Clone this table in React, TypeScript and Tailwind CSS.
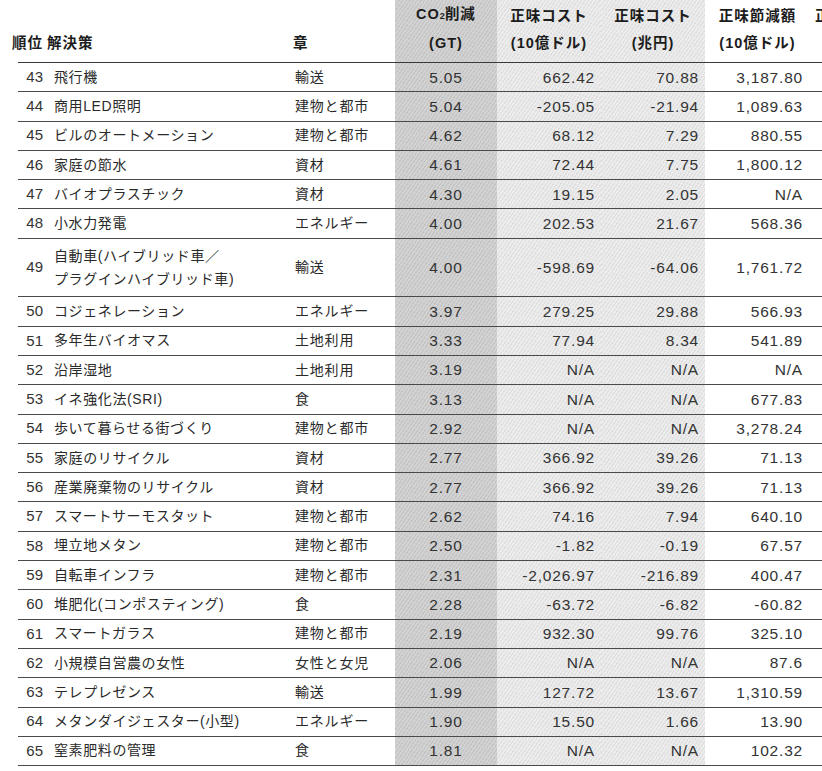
type Row = {
  rank: number
  name: string[]
  chapter: string
  co2: string
  costUsd: string
  costYen: string
  savings: string
}

const rows: Row[] = [
  { rank: 43, name: ['飛行機'], chapter: '輸送', co2: '5.05', costUsd: '662.42', costYen: '70.88', savings: '3,187.80' },
  { rank: 44, name: ['商用LED照明'], chapter: '建物と都市', co2: '5.04', costUsd: '-205.05', costYen: '-21.94', savings: '1,089.63' },
  { rank: 45, name: ['ビルのオートメーション'], chapter: '建物と都市', co2: '4.62', costUsd: '68.12', costYen: '7.29', savings: '880.55' },
  { rank: 46, name: ['家庭の節水'], chapter: '資材', co2: '4.61', costUsd: '72.44', costYen: '7.75', savings: '1,800.12' },
  { rank: 47, name: ['バイオプラスチック'], chapter: '資材', co2: '4.30', costUsd: '19.15', costYen: '2.05', savings: 'N/A' },
  { rank: 48, name: ['小水力発電'], chapter: 'エネルギー', co2: '4.00', costUsd: '202.53', costYen: '21.67', savings: '568.36' },
  { rank: 49, name: ['自動車(ハイブリッド車／', 'プラグインハイブリッド車)'], chapter: '輸送', co2: '4.00', costUsd: '-598.69', costYen: '-64.06', savings: '1,761.72' },
  { rank: 50, name: ['コジェネレーション'], chapter: 'エネルギー', co2: '3.97', costUsd: '279.25', costYen: '29.88', savings: '566.93' },
  { rank: 51, name: ['多年生バイオマス'], chapter: '土地利用', co2: '3.33', costUsd: '77.94', costYen: '8.34', savings: '541.89' },
  { rank: 52, name: ['沿岸湿地'], chapter: '土地利用', co2: '3.19', costUsd: 'N/A', costYen: 'N/A', savings: 'N/A' },
  { rank: 53, name: ['イネ強化法(SRI)'], chapter: '食', co2: '3.13', costUsd: 'N/A', costYen: 'N/A', savings: '677.83' },
  { rank: 54, name: ['歩いて暮らせる街づくり'], chapter: '建物と都市', co2: '2.92', costUsd: 'N/A', costYen: 'N/A', savings: '3,278.24' },
  { rank: 55, name: ['家庭のリサイクル'], chapter: '資材', co2: '2.77', costUsd: '366.92', costYen: '39.26', savings: '71.13' },
  { rank: 56, name: ['産業廃棄物のリサイクル'], chapter: '資材', co2: '2.77', costUsd: '366.92', costYen: '39.26', savings: '71.13' },
  { rank: 57, name: ['スマートサーモスタット'], chapter: '建物と都市', co2: '2.62', costUsd: '74.16', costYen: '7.94', savings: '640.10' },
  { rank: 58, name: ['埋立地メタン'], chapter: '建物と都市', co2: '2.50', costUsd: '-1.82', costYen: '-0.19', savings: '67.57' },
  { rank: 59, name: ['自転車インフラ'], chapter: '建物と都市', co2: '2.31', costUsd: '-2,026.97', costYen: '-216.89', savings: '400.47' },
  { rank: 60, name: ['堆肥化(コンポスティング)'], chapter: '食', co2: '2.28', costUsd: '-63.72', costYen: '-6.82', savings: '-60.82' },
  { rank: 61, name: ['スマートガラス'], chapter: '建物と都市', co2: '2.19', costUsd: '932.30', costYen: '99.76', savings: '325.10' },
  { rank: 62, name: ['小規模自営農の女性'], chapter: '女性と女児', co2: '2.06', costUsd: 'N/A', costYen: 'N/A', savings: '87.6' },
  { rank: 63, name: ['テレプレゼンス'], chapter: '輸送', co2: '1.99', costUsd: '127.72', costYen: '13.67', savings: '1,310.59' },
  { rank: 64, name: ['メタンダイジェスター(小型)'], chapter: 'エネルギー', co2: '1.90', costUsd: '15.50', costYen: '1.66', savings: '13.90' },
  { rank: 65, name: ['窒素肥料の管理'], chapter: '食', co2: '1.81', costUsd: 'N/A', costYen: 'N/A', savings: '102.32' },
]

// column template shared by header and body rows (starts at x=18)
const cols = 'grid grid-cols-[28px_247px_102px_102px_104px_104px_105px_40px]'
const dark = 'bg-[#cbcbcb] bg-[repeating-linear-gradient(125deg,#c3c3c3_0px,#c3c3c3_1px,#d2d2d2_1px,#d2d2d2_3px)]'
const light = 'bg-[#e6e6e6] bg-[repeating-linear-gradient(125deg,#dedede_0px,#dedede_1px,#ececec_1px,#ececec_3px)]'

export default function App() {
  return (
    <div className="w-[822px] h-[771px] overflow-hidden bg-white font-['Liberation_Sans','Noto_Sans_CJK_JP',sans-serif] text-[#2a2a2a]">
      <div className="ml-[18px] w-[850px]">
        {/* header */}
        <div className={`${cols} h-[63px] border-b border-[#3a3a3a] text-[14.5px] font-bold tracking-[1px] leading-[27px] text-[#1c1c1c]`}>
          <div className="flex items-end pb-[5px] -ml-[6px] whitespace-nowrap">順位</div>
          <div className="flex items-end pb-[5px] pl-[1px]">解決策</div>
          <div className="flex items-end pb-[5px]">章</div>
          <div className={`${dark} flex flex-col justify-end items-center pb-[5px]`}>
            <div>
              CO<span className="text-[9px] tracking-normal">2</span>削減
            </div>
            <div>(GT)</div>
          </div>
          <div className={`${light} flex flex-col justify-end items-center pb-[5px] whitespace-nowrap`}>
            <div>正味コスト</div>
            <div>(10億ドル)</div>
          </div>
          <div className={`${light} flex flex-col justify-end items-center pb-[5px] whitespace-nowrap`}>
            <div>正味コスト</div>
            <div>(兆円)</div>
          </div>
          <div className="flex flex-col justify-end items-center pb-[5px] whitespace-nowrap">
            <div>正味節減額</div>
            <div>(10億ドル)</div>
          </div>
          <div className="flex flex-col justify-end pb-[5px] pl-[5px] whitespace-nowrap">
            <div>正</div>
            <div>&nbsp;</div>
          </div>
        </div>

        {/* body */}
        {rows.map((r) => (
          <div
            key={r.rank}
            className={`${cols} ${r.name.length > 1 ? 'h-[58.6px]' : 'h-[29.3px]'} border-b border-[#4a4a4a] items-stretch`}
          >
            <div className="flex items-center justify-end pr-[3px] text-[15px] text-[#333]">{r.rank}</div>
            <div className="flex flex-col justify-center pl-[8px] text-[14px] tracking-[0.6px] leading-[23px] whitespace-nowrap">
              {r.name.map((n) => (
                <div key={n}>{n}</div>
              ))}
            </div>
            <div className="flex items-center pl-[2px] text-[14px] tracking-[0.8px] whitespace-nowrap">{r.chapter}</div>
            <div className={`${dark} flex items-center justify-center text-[15.5px] tracking-[0.8px] text-[#333]`}>{r.co2}</div>
            <div className={`${light} flex items-center justify-end pr-[6px] text-[15.5px] tracking-[0.8px] text-[#333]`}>{r.costUsd}</div>
            <div className={`${light} flex items-center justify-end pr-[6px] text-[15.5px] tracking-[0.8px] text-[#333]`}>{r.costYen}</div>
            <div className="flex items-center justify-end pr-[7px] text-[15.5px] tracking-[0.8px] text-[#333]">{r.savings}</div>
            <div />
          </div>
        ))}
      </div>
    </div>
  )
}
